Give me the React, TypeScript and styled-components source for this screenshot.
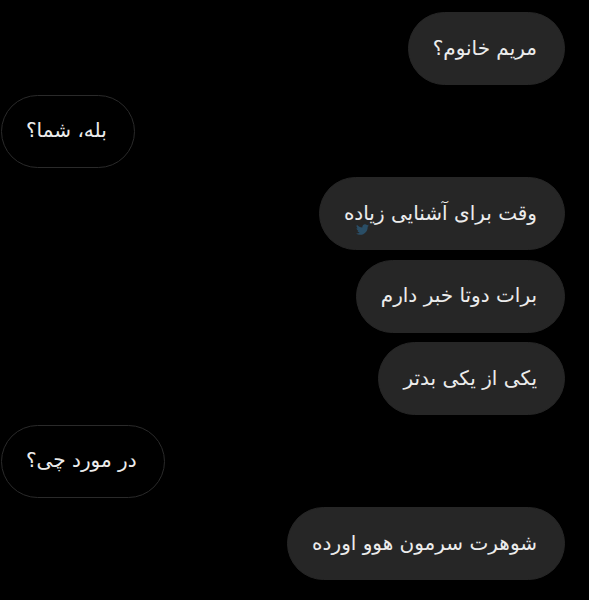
import { createGlobalStyle, styled } from "styled-components";
import { FaTwitter } from "react-icons/fa";

const GlobalStyle = createGlobalStyle`
	html, body {
		margin: 0;
		padding: 0;
		background: #000;
	}
`;

interface IMessage {
	text: string;
	mine: boolean;
	mark?: boolean;
}

const messages: IMessage[] = [
	{ text: "مریم خانوم؟", mine: true },
	{ text: "بله، شما؟", mine: false },
	{ text: "وقت برای آشنایی زیاده", mine: true, mark: true },
	{ text: "برات دوتا خبر دارم", mine: true },
	{ text: "یکی از یکی بدتر", mine: true },
	{ text: "در مورد چی؟", mine: false },
	{ text: "شوهرت سرمون هوو اورده", mine: true },
];

const Chat = styled.div`
	width: 589px;
	height: 600px;
	box-sizing: border-box;
	background: #000;
	display: flex;
	flex-direction: column;
	gap: 9.5px;
	padding: 12px 24px 0 1px;
	overflow: hidden;
	font-family: "DejaVu Sans", "Noto Sans", sans-serif;
`;

const Bubble = styled.div<{ $mine: boolean }>`
	position: relative;
	align-self: ${(p) => (p.$mine ? "flex-end" : "flex-start")};
	height: 73px;
	box-sizing: border-box;
	display: flex;
	align-items: center;
	padding: 0 27px 2px 24px;
	border-radius: 37px;
	background: ${(p) => (p.$mine ? "#262626" : "#000")};
	border: 1.5px solid ${(p) => (p.$mine ? "#262626" : "#2a2a2a")};
	color: #ececec;
	font-size: 20px;
	direction: rtl;
	white-space: nowrap;
`;

const Mark = styled.span`
	position: absolute;
	left: 36px;
	bottom: 13px;
	color: #2c5877;
	opacity: 0.8;
	display: flex;
`;

function App() {
	return (
		<>
			<GlobalStyle />
			<Chat>
				{messages.map((m, i) => (
					<Bubble key={i} $mine={m.mine}>
						{m.text}
						{m.mark && (
							<Mark>
								<FaTwitter size={13} />
							</Mark>
						)}
					</Bubble>
				))}
			</Chat>
		</>
	);
}

export default App;
